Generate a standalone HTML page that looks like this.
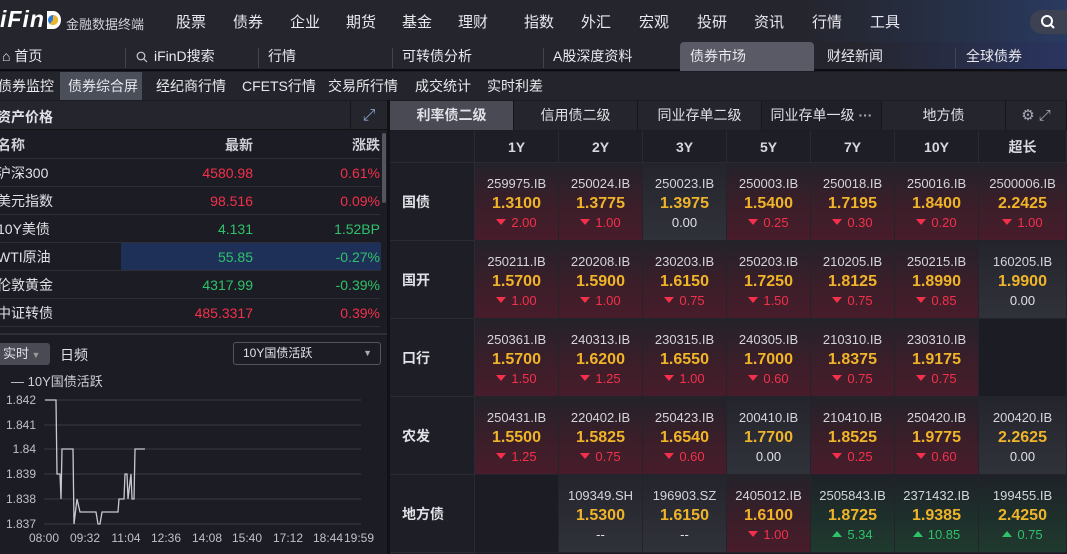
<!DOCTYPE html>
<html><head><meta charset="utf-8"><style>
*{margin:0;padding:0;box-sizing:border-box}
body{width:1067px;height:554px;overflow:hidden;background:#1c1c24;font-family:"Liberation Sans","Noto Sans CJK SC",sans-serif;color:#e0e0e6;position:relative;font-size:13px}
.abs{position:absolute}
#top{left:0;top:0;width:1067px;height:42px;background:linear-gradient(90deg,#25252d 0%,#25252d 75%,#263048 90%,#2a3a60 100%)}
.nav{top:11px;font-size:15px;color:#e8e8ee}
#tabs{left:0;top:42px;width:1067px;height:29px;background:linear-gradient(90deg,#25252d 0%,#25252d 80%,#2a3560 100%);border-bottom:2px solid #0e0e12}
.tab{top:42px;height:29px;line-height:29px;font-size:14px;color:#e8e8ee}
.sep{top:48px;width:1px;height:20px;background:#44444c}
#sub{left:0;top:72px;width:1067px;height:28px;background:#24242c}
.si{top:72px;height:28px;line-height:28px;font-size:14px;color:#e8e8ee}
.lrow{left:0;width:380px;height:28px;border-bottom:1px solid #2e2e36;font-size:14px;line-height:28px}
.lrow span{position:absolute}
.red{color:#f5304a}.grn{color:#2ec26a}
.th{top:131px;height:32px;line-height:32px;text-align:center;font-weight:bold;font-size:14px;color:#d8d8e0;background:#1e1e26;border-right:1px solid #2a2a32;border-bottom:1px solid #2a2a32}
.lab{left:390px;width:85px;height:78px;line-height:78px;padding-left:12px;font-weight:bold;font-size:14px;background:#1e1e26;border-bottom:1px solid #2a2a32;border-right:1px solid #2a2a32}
.c{width:84px;height:78px;text-align:center;border-right:1px solid #23232b;border-bottom:1px solid #23232b}
.c .a{margin-top:12px;font-size:13px;color:#d4d4dc;line-height:18px}
.c .b{font-size:16px;font-weight:bold;color:#f0b429;line-height:21px}
.c .d{font-size:13px;line-height:18px}
.r{background:linear-gradient(180deg,#24222a 0%,#3c1e29 60%,#481c2b 100%)}
.n{background:linear-gradient(180deg,#24242c 0%,#30323a 100%)}
.g{background:linear-gradient(180deg,#1e2228 0%,#1f3a2e 100%)}
.e{background:#1c1c24}
.dn::before{content:"";display:inline-block;border-left:5px solid transparent;border-right:5px solid transparent;border-top:6px solid #f5304a;margin-right:5px;vertical-align:2px}
.up::before{content:"";display:inline-block;border-left:5px solid transparent;border-right:5px solid transparent;border-bottom:6px solid #2ec26a;margin-right:5px;vertical-align:2px}
.rt{top:101px;height:29px;line-height:29px;text-align:center;font-size:14px;background:#25252d;border-right:1px solid #15151b}
</style></head><body>
<div id="top" class="abs"></div>
<div class="abs" style="left:0;top:6px;font-size:23px;font-weight:bold;font-style:italic;color:#fff;letter-spacing:1px">iFin</div>
<svg class="abs" style="left:45px;top:10px" width="18" height="20"><path d="M2 1h6a8 9 0 0 1 0 18H2z" fill="#fff"/><circle cx="8" cy="10" r="5" fill="#2a7ad8"/><path d="M8 10V5a5 5 0 0 1 5 5z" fill="#f0b429"/><path d="M8 10h5a5 5 0 0 1-8 4z" fill="#f0b429"/></svg>
<div class="abs" style="left:66px;top:14px;font-size:13px;color:#d0d0d8">金融数据终端</div>
<div class="abs nav" style="left:176px">股票</div><div class="abs nav" style="left:233px">债券</div><div class="abs nav" style="left:290px">企业</div><div class="abs nav" style="left:346px">期货</div><div class="abs nav" style="left:402px">基金</div><div class="abs nav" style="left:458px">理财</div><div class="abs nav" style="left:524px">指数</div><div class="abs nav" style="left:581px">外汇</div><div class="abs nav" style="left:639px">宏观</div><div class="abs nav" style="left:697px">投研</div><div class="abs nav" style="left:754px">资讯</div><div class="abs nav" style="left:812px">行情</div><div class="abs nav" style="left:870px">工具</div>
<div class="abs" style="left:1030px;top:10px;width:50px;height:24px;border-radius:12px;background:#3c4252"></div>
<svg class="abs" style="left:1040px;top:14px" width="16" height="16"><circle cx="7" cy="7" r="5" fill="none" stroke="#fff" stroke-width="2"/><line x1="11" y1="11" x2="14" y2="14" stroke="#fff" stroke-width="2"/></svg>
<div id="tabs" class="abs"></div>
<div class="abs" style="left:680px;top:42px;width:134px;height:29px;background:#5a5a66;border-radius:4px 4px 0 0"></div>
<div class="abs tab" style="left:2px">⌂ 首页</div>
<div class="abs sep" style="left:125px"></div>
<svg class="abs" style="left:136px;top:51px" width="12" height="12"><circle cx="5" cy="5" r="3.8" fill="none" stroke="#ccc" stroke-width="1.2"/><line x1="8" y1="8" x2="11" y2="11" stroke="#ccc" stroke-width="1.2"/></svg>
<div class="abs tab" style="left:154px">iFinD搜索</div>
<div class="abs sep" style="left:258px"></div>
<div class="abs tab" style="left:268px">行情</div>
<div class="abs sep" style="left:392px"></div>
<div class="abs tab" style="left:402px">可转债分析</div>
<div class="abs sep" style="left:543px"></div>
<div class="abs tab" style="left:553px">A股深度资料</div>
<div class="abs tab" style="left:690px">债券市场</div>
<div class="abs tab" style="left:827px">财经新闻</div>
<div class="abs sep" style="left:955px"></div>
<div class="abs tab" style="left:966px">全球债券</div>
<div id="sub" class="abs"></div>
<div class="abs" style="left:60px;top:72px;width:82px;height:28px;background:#4a4f5a"></div>
<div class="abs si" style="left:-2px">债券监控</div><div class="abs si" style="left:68px">债券综合屏</div><div class="abs si" style="left:156px">经纪商行情</div><div class="abs si" style="left:242px">CFETS行情</div><div class="abs si" style="left:328px">交易所行情</div><div class="abs si" style="left:415px">成交统计</div><div class="abs si" style="left:487px">实时利差</div>
<!-- left panel -->
<div class="abs" style="left:0;top:101px;width:387px;height:29px;background:#25252d;border-bottom:1px solid #111"></div>
<div class="abs" style="left:-3px;top:107px;font-size:14px;font-weight:bold;color:#e0e0e8">资产价格</div>
<div class="abs" style="left:350px;top:101px;width:37px;height:29px;border-left:1px solid #15151b;color:#8aa0c8;font-size:16px;text-align:center;line-height:29px">⤢</div>
<div class="abs" style="left:387px;top:100px;width:3px;height:454px;background:#111116"></div>
<div class="abs lrow" style="top:131px;font-weight:bold;color:#d0d0d8"><span style="left:-3px">名称</span><span style="left:225px">最新</span><span style="right:0">涨跌</span></div>
<div class="abs lrow" style="top:159px"><span style="left:-3px">沪深300</span><span class="red" style="right:127px">4580.98</span><span class="red" style="right:0">0.61%</span></div>
<div class="abs lrow" style="top:187px"><span style="left:-3px">美元指数</span><span class="red" style="right:127px">98.516</span><span class="red" style="right:0">0.09%</span></div>
<div class="abs lrow" style="top:215px"><span style="left:-3px">10Y美债</span><span class="grn" style="right:127px">4.131</span><span class="grn" style="right:0">1.52BP</span></div>
<div class="abs lrow" style="top:243px"><div class="abs" style="left:121px;top:0;width:260px;height:27px;background:#1e3058"></div><span style="left:-3px">WTI原油</span><span class="grn" style="right:127px">55.85</span><span class="grn" style="right:0">-0.27%</span></div>
<div class="abs lrow" style="top:271px"><span style="left:-3px">伦敦黄金</span><span class="grn" style="right:127px">4317.99</span><span class="grn" style="right:0">-0.39%</span></div>
<div class="abs lrow" style="top:299px"><span style="left:-3px">中证转债</span><span class="red" style="right:127px">485.3317</span><span class="red" style="right:0">0.39%</span></div>
<div class="abs" style="left:382px;top:133px;width:4px;height:70px;background:#55555e;border-radius:2px"></div>
<div class="abs" style="left:0;top:333px;width:387px;height:2px;background:#2e2e36"></div>
<div class="abs" style="left:0;top:343px;width:50px;height:22px;background:#4a4a55;border-radius:0 3px 3px 0;font-size:13px;line-height:22px;padding-left:3px">实时<span style="color:#999;font-size:9px"> ▼</span></div>
<div class="abs" style="left:60px;top:345px;font-size:14px">日频</div>
<div class="abs" style="left:233px;top:342px;width:148px;height:23px;border:1px solid #55555e;border-radius:3px;font-size:12px;line-height:21px;padding-left:9px">10Y国债活跃<span style="position:absolute;right:8px;color:#aaa;font-size:9px">▼</span></div>
<div class="abs" style="left:11px;top:371px;font-size:13px;color:#d0d0d8">— 10Y国债活跃</div>
<svg class="abs" style="left:0;top:385px" width="387" height="169">
<g stroke="#3a3a42" stroke-width="1">
<line x1="44" y1="15" x2="361" y2="15"/><line x1="44" y1="40" x2="361" y2="40"/><line x1="44" y1="64" x2="361" y2="64"/><line x1="44" y1="89" x2="361" y2="89"/><line x1="44" y1="114" x2="361" y2="114"/><line x1="44" y1="139" x2="361" y2="139"/></g>
<g fill="#c0c0c8" font-size="12" font-family="Liberation Sans" text-anchor="end">
<text x="36" y="19">1.842</text><text x="36" y="44">1.841</text><text x="36" y="68">1.84</text><text x="36" y="93">1.839</text><text x="36" y="118">1.838</text><text x="36" y="143">1.837</text></g>
<g fill="#c0c0c8" font-size="12" font-family="Liberation Sans" text-anchor="middle">
<text x="44" y="157">08:00</text><text x="85" y="157">09:32</text><text x="126" y="157">11:04</text><text x="166" y="157">12:36</text><text x="207" y="157">14:08</text><text x="247" y="157">15:40</text><text x="288" y="157">17:12</text><text x="328" y="157">18:44</text><text x="359" y="157">19:59</text></g>
<polyline fill="none" stroke="#c8c8d0" stroke-width="1.3" points="45,15 56,15 57,89 60,89 61,114 62,64 73,64 74,139 77,114 80,127 96,127 98,139 100,139 102,127 118,127 119,114 124,114 125,89 127,89 128,114 131,89 132,114 134,114 135,64 137,64 145,64"/>
</svg>
<!-- right tabs -->
<div class="abs rt" style="left:390px;width:124px;background:#4a4a55;font-weight:bold">利率债二级</div>
<div class="abs rt" style="left:514px;width:124px">信用债二级</div>
<div class="abs rt" style="left:638px;width:124px">同业存单二级</div>
<div class="abs rt" style="left:762px;width:120px;background:#202028">同业存单一级 <b style="color:#aaa">···</b></div>
<div class="abs rt" style="left:882px;width:124px">地方债</div>
<div class="abs rt" style="left:1006px;width:61px;color:#aab;font-size:15px">⚙ ⤢</div>
<!-- header -->
<div class="abs th" style="left:390px;width:85px"></div>
<div class="abs th" style="left:475px;width:84px">1Y</div><div class="abs th" style="left:559px;width:84px">2Y</div><div class="abs th" style="left:643px;width:84px">3Y</div><div class="abs th" style="left:727px;width:84px">5Y</div><div class="abs th" style="left:811px;width:84px">7Y</div><div class="abs th" style="left:895px;width:84px">10Y</div><div class="abs th" style="left:979px;width:88px">超长</div>
<div class="abs lab" style="top:163px">国债</div>
<div class="abs lab" style="top:241px">国开</div>
<div class="abs lab" style="top:319px">口行</div>
<div class="abs lab" style="top:397px">农发</div>
<div class="abs lab" style="top:475px">地方债</div>
<!-- row 国债 -->
<div class="abs c r" style="left:475px;top:163px"><div class="a">259975.IB</div><div class="b">1.3100</div><div class="d red dn">2.00</div></div>
<div class="abs c r" style="left:559px;top:163px"><div class="a">250024.IB</div><div class="b">1.3775</div><div class="d red dn">1.00</div></div>
<div class="abs c n" style="left:643px;top:163px"><div class="a">250023.IB</div><div class="b">1.3975</div><div class="d">0.00</div></div>
<div class="abs c r" style="left:727px;top:163px"><div class="a">250003.IB</div><div class="b">1.5400</div><div class="d red dn">0.25</div></div>
<div class="abs c r" style="left:811px;top:163px"><div class="a">250018.IB</div><div class="b">1.7195</div><div class="d red dn">0.30</div></div>
<div class="abs c r" style="left:895px;top:163px"><div class="a">250016.IB</div><div class="b">1.8400</div><div class="d red dn">0.20</div></div>
<div class="abs c r" style="left:979px;top:163px;width:88px"><div class="a">2500006.IB</div><div class="b">2.2425</div><div class="d red dn">1.00</div></div>
<!-- 国开 -->
<div class="abs c r" style="left:475px;top:241px"><div class="a">250211.IB</div><div class="b">1.5700</div><div class="d red dn">1.00</div></div>
<div class="abs c r" style="left:559px;top:241px"><div class="a">220208.IB</div><div class="b">1.5900</div><div class="d red dn">1.00</div></div>
<div class="abs c r" style="left:643px;top:241px"><div class="a">230203.IB</div><div class="b">1.6150</div><div class="d red dn">0.75</div></div>
<div class="abs c r" style="left:727px;top:241px"><div class="a">250203.IB</div><div class="b">1.7250</div><div class="d red dn">1.50</div></div>
<div class="abs c r" style="left:811px;top:241px"><div class="a">210205.IB</div><div class="b">1.8125</div><div class="d red dn">0.75</div></div>
<div class="abs c r" style="left:895px;top:241px"><div class="a">250215.IB</div><div class="b">1.8990</div><div class="d red dn">0.85</div></div>
<div class="abs c n" style="left:979px;top:241px;width:88px"><div class="a">160205.IB</div><div class="b">1.9900</div><div class="d">0.00</div></div>
<!-- 口行 -->
<div class="abs c r" style="left:475px;top:319px"><div class="a">250361.IB</div><div class="b">1.5700</div><div class="d red dn">1.50</div></div>
<div class="abs c r" style="left:559px;top:319px"><div class="a">240313.IB</div><div class="b">1.6200</div><div class="d red dn">1.25</div></div>
<div class="abs c r" style="left:643px;top:319px"><div class="a">230315.IB</div><div class="b">1.6550</div><div class="d red dn">1.00</div></div>
<div class="abs c r" style="left:727px;top:319px"><div class="a">240305.IB</div><div class="b">1.7000</div><div class="d red dn">0.60</div></div>
<div class="abs c r" style="left:811px;top:319px"><div class="a">210310.IB</div><div class="b">1.8375</div><div class="d red dn">0.75</div></div>
<div class="abs c r" style="left:895px;top:319px"><div class="a">230310.IB</div><div class="b">1.9175</div><div class="d red dn">0.75</div></div>
<div class="abs c e" style="left:979px;top:319px;width:88px"></div>
<!-- 农发 -->
<div class="abs c r" style="left:475px;top:397px"><div class="a">250431.IB</div><div class="b">1.5500</div><div class="d red dn">1.25</div></div>
<div class="abs c r" style="left:559px;top:397px"><div class="a">220402.IB</div><div class="b">1.5825</div><div class="d red dn">0.75</div></div>
<div class="abs c r" style="left:643px;top:397px"><div class="a">250423.IB</div><div class="b">1.6540</div><div class="d red dn">0.60</div></div>
<div class="abs c n" style="left:727px;top:397px"><div class="a">200410.IB</div><div class="b">1.7700</div><div class="d">0.00</div></div>
<div class="abs c r" style="left:811px;top:397px"><div class="a">210410.IB</div><div class="b">1.8525</div><div class="d red dn">0.25</div></div>
<div class="abs c r" style="left:895px;top:397px"><div class="a">250420.IB</div><div class="b">1.9775</div><div class="d red dn">0.60</div></div>
<div class="abs c n" style="left:979px;top:397px;width:88px"><div class="a">200420.IB</div><div class="b">2.2625</div><div class="d">0.00</div></div>
<!-- 地方债 -->
<div class="abs c e" style="left:475px;top:475px"></div>
<div class="abs c n" style="left:559px;top:475px"><div class="a">109349.SH</div><div class="b">1.5300</div><div class="d">--</div></div>
<div class="abs c n" style="left:643px;top:475px"><div class="a">196903.SZ</div><div class="b">1.6150</div><div class="d">--</div></div>
<div class="abs c r" style="left:727px;top:475px"><div class="a">2405012.IB</div><div class="b">1.6100</div><div class="d red dn">1.00</div></div>
<div class="abs c g" style="left:811px;top:475px"><div class="a">2505843.IB</div><div class="b">1.8725</div><div class="d grn up">5.34</div></div>
<div class="abs c g" style="left:895px;top:475px"><div class="a">2371432.IB</div><div class="b">1.9385</div><div class="d grn up">10.85</div></div>
<div class="abs c g" style="left:979px;top:475px;width:88px"><div class="a">199455.IB</div><div class="b">2.4250</div><div class="d grn up">0.75</div></div>
</body></html>
